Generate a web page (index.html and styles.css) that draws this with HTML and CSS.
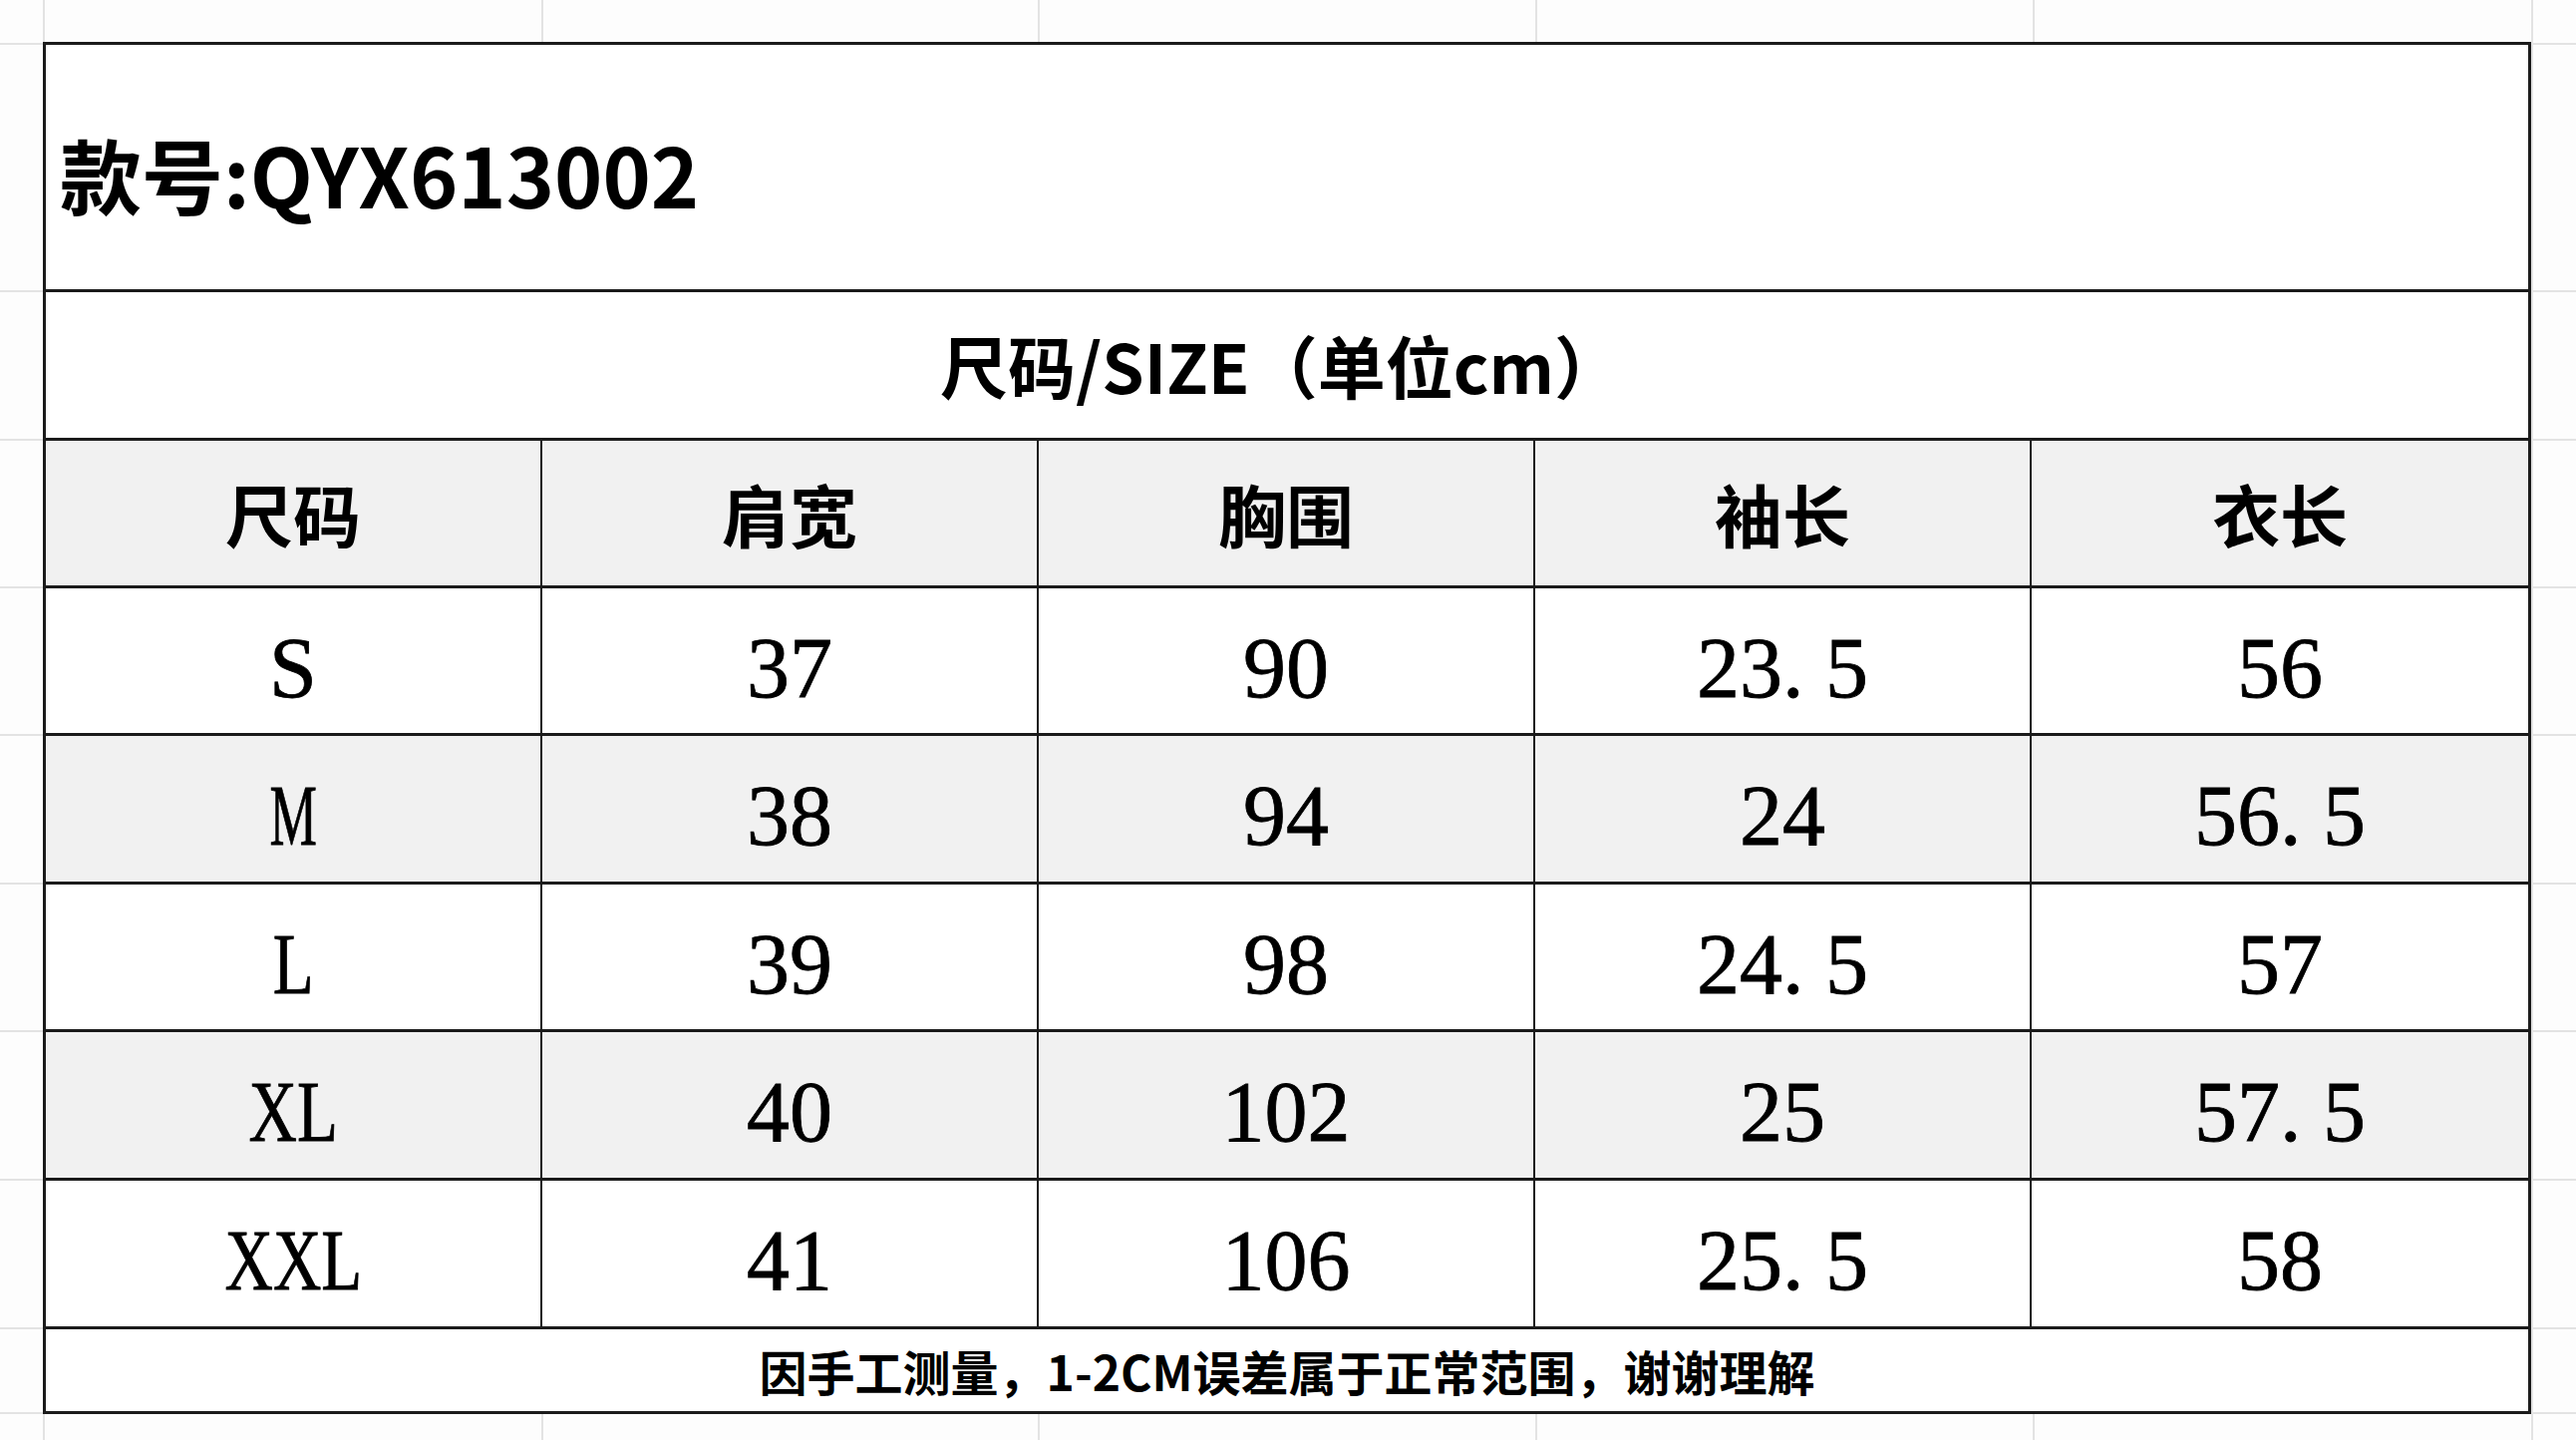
FILE: index.html
```html
<!DOCTYPE html>
<html lang="zh-CN">
<head>
<meta charset="utf-8">
<title>尺码表 QYX613002</title>
<link rel="stylesheet" href="styles.css">
</head>
<body>
<div class="sheet">
  <div class="table">
    <div class="row row-id">款号:QYX613002</div>
    <div class="row row-title">尺码/SIZE（单位cm）</div>
    <div class="row grid head shade">
      <div class="cell">尺码</div>
      <div class="cell">肩宽</div>
      <div class="cell">胸围</div>
      <div class="cell">袖长</div>
      <div class="cell">衣长</div>
    </div>
    <div class="row grid data">
      <div class="cell"><span class="size size-s">S</span></div>
      <div class="cell">37</div>
      <div class="cell">90</div>
      <div class="cell">23<span class="dot">.</span>5</div>
      <div class="cell">56</div>
    </div>
    <div class="row grid data tall shade">
      <div class="cell"><span class="size size-m">M</span></div>
      <div class="cell">38</div>
      <div class="cell">94</div>
      <div class="cell">24</div>
      <div class="cell">56<span class="dot">.</span>5</div>
    </div>
    <div class="row grid data">
      <div class="cell"><span class="size">L</span></div>
      <div class="cell">39</div>
      <div class="cell">98</div>
      <div class="cell">24<span class="dot">.</span>5</div>
      <div class="cell">57</div>
    </div>
    <div class="row grid data tall shade">
      <div class="cell"><span class="size">XL</span></div>
      <div class="cell">40</div>
      <div class="cell">102</div>
      <div class="cell">25</div>
      <div class="cell">57<span class="dot">.</span>5</div>
    </div>
    <div class="row grid data tall">
      <div class="cell"><span class="size">XXL</span></div>
      <div class="cell">41</div>
      <div class="cell">106</div>
      <div class="cell">25<span class="dot">.</span>5</div>
      <div class="cell">58</div>
    </div>
    <div class="note">因手工测量，1-2CM误差属于正常范围，谢谢理解</div>
  </div>
</div>
</body>
</html>
```

FILE: styles.css
```css
* {
  box-sizing: border-box;
}

html,
body {
  margin: 0;
  padding: 0;
}

body {
  width: 2584px;
  height: 1444px;
  overflow: hidden;
  color: #000;
  font-family: "Noto Sans CJK SC", sans-serif;
  background:
    linear-gradient(#e3e3e3, #e3e3e3) 43px 0 / 2px 100% no-repeat,
    linear-gradient(#e3e3e3, #e3e3e3) 543px 0 / 2px 100% no-repeat,
    linear-gradient(#e3e3e3, #e3e3e3) 1041px 0 / 2px 100% no-repeat,
    linear-gradient(#e3e3e3, #e3e3e3) 1540px 0 / 2px 100% no-repeat,
    linear-gradient(#e3e3e3, #e3e3e3) 2039px 0 / 2px 100% no-repeat,
    linear-gradient(#e3e3e3, #e3e3e3) 2539px 0 / 2px 100% no-repeat,
    linear-gradient(#e3e3e3, #e3e3e3) 0 43px / 100% 2px no-repeat,
    linear-gradient(#e3e3e3, #e3e3e3) 0 291px / 100% 2px no-repeat,
    linear-gradient(#e3e3e3, #e3e3e3) 0 440px / 100% 2px no-repeat,
    linear-gradient(#e3e3e3, #e3e3e3) 0 588px / 100% 2px no-repeat,
    linear-gradient(#e3e3e3, #e3e3e3) 0 736px / 100% 2px no-repeat,
    linear-gradient(#e3e3e3, #e3e3e3) 0 885px / 100% 2px no-repeat,
    linear-gradient(#e3e3e3, #e3e3e3) 0 1033px / 100% 2px no-repeat,
    linear-gradient(#e3e3e3, #e3e3e3) 0 1182px / 100% 2px no-repeat,
    linear-gradient(#e3e3e3, #e3e3e3) 0 1331px / 100% 2px no-repeat,
    linear-gradient(#e3e3e3, #e3e3e3) 0 1416px / 100% 2px no-repeat,
    #fdfdfd;
}

.sheet {
  padding: 42px 45px 0 43px;
}

.table {
  display: flex;
  flex-direction: column;
  border: 3px solid #1b1b1b;
  background: #fff;
}

.row {
  border-bottom: 3px solid #1b1b1b;
}

.row-id {
  height: 248px;
  display: flex;
  align-items: center;
  padding: 12px 0 0 14px;
  font-weight: 700;
  font-size: 82px;
  line-height: 1;
}

.row-title {
  height: 149px;
  display: flex;
  align-items: center;
  justify-content: center;
  padding-right: 12px;
  font-weight: 700;
  font-size: 68px;
  line-height: 1;
}

.grid {
  display: grid;
  grid-template-columns: repeat(5, 1fr);
  height: 148px;
}

.grid.tall {
  height: 149px;
}

.shade {
  background: #f1f1f1;
}

.cell {
  display: flex;
  align-items: center;
  justify-content: center;
  border-right: 2px solid #1b1b1b;
  line-height: 1;
}

.cell:last-child {
  border-right: 0;
}

.head .cell {
  font-weight: 700;
  font-size: 68px;
}

.data .cell {
  padding-top: 14px;
  font-family: "Liberation Serif", serif;
  font-size: 86px;
  font-weight: 400;
  -webkit-text-stroke: 0.8px #000;
}

.dot {
  margin-right: 0.25em;
}

.size {
  display: inline-block;
  transform: scaleX(0.78);
}

.size-s {
  transform: none;
}

.size-m {
  transform: scaleX(0.62);
}

.note {
  height: 82px;
  display: flex;
  align-items: center;
  justify-content: center;
  font-weight: 700;
  font-size: 48px;
  line-height: 1;
}
```
